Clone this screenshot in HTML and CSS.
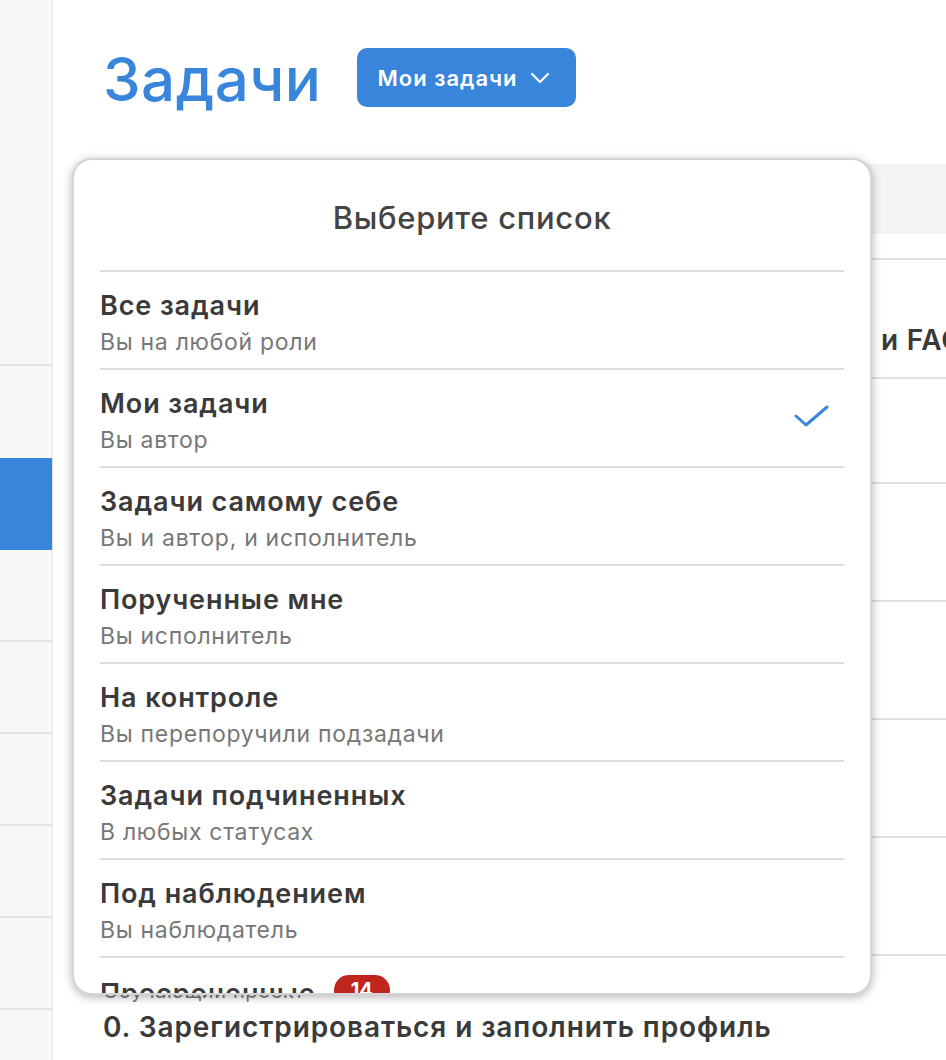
FILE: index.html
```html
<!DOCTYPE html>
<html lang="ru">

<head>
    <meta charset="UTF-8">
    <meta name="viewport" content="width=device-width, initial-scale=1.0">
    <title>Задачи</title>
    <link rel="stylesheet" href="styles.css">
</head>

<body>
    <div class="app">
        <div class="sidebar">
            <div class="side-top"></div>
            <div class="side-item"></div>
            <div class="side-item active"></div>
            <div class="side-item line"></div>
            <div class="side-item line"></div>
            <div class="side-item line"></div>
            <div class="side-item line"></div>
            <div class="side-item line"></div>
            <div class="side-item"></div>
        </div>

        <div class="main">
            <div class="header">
                <h1 class="title">Задачи</h1>
                <button class="list-btn">
                    Мои задачи
                    <svg width="20" height="12" viewBox="0 0 20 12"><path d="M2 2l8 8 8-8" fill="none" stroke="#fff" stroke-width="2.2" stroke-linecap="round" stroke-linejoin="round"/></svg>
                </button>
            </div>

            <div class="table">
                <div class="table-head"></div>
                <div class="row first">
                    <p class="project">Обучающий проект</p>
                    <p class="task">1. Изучить базу знаний: видео, инструкция, правила и FAQ</p>
                </div>
                <div class="row short"><p class="task">2. Настроить</p></div>
                <div class="row"><p class="task">3. Создать</p></div>
                <div class="row"><p class="task">4. Пригласить</p></div>
                <div class="row"><p class="task">5. Проверить</p></div>
                <div class="row"><p class="task">6. Поручить</p></div>
                <div class="row">
                    <p class="project">Обучающий проект</p>
                    <p class="task">0. Зарегистрироваться и заполнить профиль</p>
                </div>
            </div>
        </div>

        <div class="dropdown">
            <h2 class="dropdown-title">Выберите список</h2>
            <ul class="lists">
                <li>
                    <p class="name">Все задачи</p>
                    <p class="hint">Вы на любой роли</p>
                </li>
                <li>
                    <p class="name">Мои задачи</p>
                    <p class="hint">Вы автор</p>
                    <svg class="check" width="36" height="26" viewBox="0 0 36 26"><path d="M2 12l10 9L33 3" fill="none" stroke="#3a85dc" stroke-width="3" stroke-linecap="round" stroke-linejoin="round"/></svg>
                </li>
                <li>
                    <p class="name">Задачи самому себе</p>
                    <p class="hint">Вы и автор, и исполнитель</p>
                </li>
                <li>
                    <p class="name">Порученные мне</p>
                    <p class="hint">Вы исполнитель</p>
                </li>
                <li>
                    <p class="name">На контроле</p>
                    <p class="hint">Вы перепоручили подзадачи</p>
                </li>
                <li>
                    <p class="name">Задачи подчиненных</p>
                    <p class="hint">В любых статусах</p>
                </li>
                <li>
                    <p class="name">Под наблюдением</p>
                    <p class="hint">Вы наблюдатель</p>
                </li>
                <li>
                    <p class="name">Просроченные<span class="badge">14</span></p>
                    <p class="hint">Срок истек</p>
                </li>
            </ul>
        </div>
    </div>
</body>

</html>
```

FILE: styles.css
```css
* {
    margin: 0;
    padding: 0;
    box-sizing: border-box;
    font-family: 'Inter', 'Noto Sans', sans-serif;
}

body {
    width: 946px;
    height: 1060px;
    overflow: hidden;
    background: #fff;
}

.app {
    position: relative;
    display: flex;
    height: 1060px;
}

.sidebar {
    width: 53px;
    flex-shrink: 0;
    background-color: #f7f7f7;
    border-right: 1px solid #e6e6e6;
}

.side-top {
    height: 366px;
    border-bottom: 2px solid #e4e4e4;
}

.side-item {
    height: 92px;
}

.side-item.line {
    border-bottom: 2px solid #e4e4e4;
}

.side-item.active {
    background-color: #3a85dc;
}

.main {
    flex: 1;
    overflow: hidden;
}

.header {
    display: flex;
    align-items: flex-start;
    gap: 36px;
    padding: 48px 0 0 50px;
    height: 164px;
}

.title {
    font-size: 60px;
    font-weight: 500;
    color: #3a85dc;
    line-height: 62px;
    letter-spacing: 0.5px;
}

.list-btn {
    display: flex;
    align-items: center;
    gap: 12px;
    height: 59px;
    padding: 0 26px 0 20px;
    border: 0;
    border-radius: 10px;
    background-color: #3a85dc;
    color: #fff;
    font-size: 22px;
    font-weight: 600;
    letter-spacing: 1px;
}

.table {
    padding-left: 50px;
    white-space: nowrap;
}

.table-head {
    height: 70px;
    background-color: #f3f3f3;
    margin-bottom: 24px;
}

.row {
    height: 118px;
    border-top: 2px solid #e2e2e2;
    padding-top: 22px;
}

.row.first {
    height: 119px;
    padding-top: 31px;
}

.row.short {
    height: 105px;
}

.project {
    font-size: 20px;
    color: #777;
    line-height: 26px;
    letter-spacing: 0.6px;
}

.task {
    font-size: 28px;
    font-weight: 600;
    color: #3a3a3a;
    line-height: 36px;
    letter-spacing: 0.9px;
    margin-top: 5px;
}

.row.first .task {
    letter-spacing: 0.75px;
}

.dropdown {
    position: absolute;
    left: 72px;
    top: 158px;
    width: 800px;
    height: 837px;
    overflow: hidden;
    background: #fff;
    border: 2px solid #d4d4d4;
    border-radius: 20px;
    box-shadow: 0 2px 10px rgba(0, 0, 0, 0.3);
    padding: 0 26px;
}

.dropdown-title {
    text-align: center;
    font-size: 31px;
    font-weight: 500;
    color: #444;
    line-height: 36px;
    letter-spacing: 0.7px;
    padding: 40px 0 34px;
}

.lists {
    list-style: none;
}

.lists li {
    position: relative;
    height: 98px;
    border-top: 2px solid #dedede;
    padding-top: 17px;
}

.name {
    font-size: 27px;
    font-weight: 600;
    color: #3a3a3a;
    line-height: 34px;
    letter-spacing: 0.9px;
}

.hint {
    font-size: 23px;
    color: #777;
    line-height: 30px;
    letter-spacing: 0.7px;
    margin-top: 4px;
}

.check {
    position: absolute;
    right: 14px;
    top: 34px;
}

.badge {
    display: inline-block;
    vertical-align: 6px;
    margin-left: 18px;
    background-color: #c0261d;
    color: #fff;
    font-size: 20px;
    font-weight: 700;
    line-height: 30px;
    padding: 0 17px;
    border-radius: 16px;
    letter-spacing: 0;
}
```
